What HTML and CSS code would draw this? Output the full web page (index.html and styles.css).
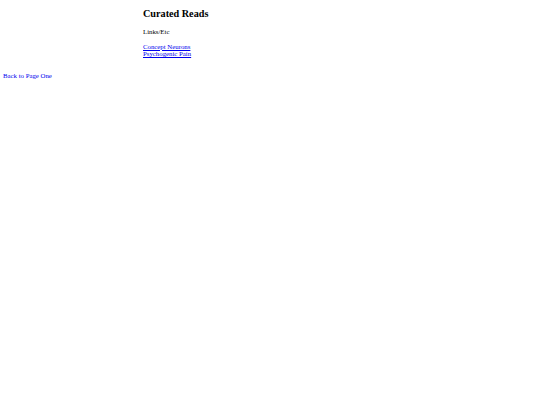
FILE: index.html
```html
<!DOCTYPE html>
<html>
<head>
<meta charset="utf-8">
<link rel="stylesheet" href="styles.css">
</head>
<body>
<div class="main">
<h2 class="title">Curated Reads</h2>
<p class="sub">Links/Etc</p>
<p class="links"><a href="#">Concept Neurons</a><br><a href="#">Psychogenic Pain</a></p>
</div>
<p class="back"><a href="#">Back to Page One</a></p>
</body>
</html>
```
FILE: styles.css
```css
body {
  margin: 3px;
  font-family: "Liberation Serif", "Times New Roman", serif;
  font-size: 6.8px;
  line-height: 7.6px;
  color: #000;
  background: #fff;
}
.main {
  padding-left: 140px;
}
.title {
  font-size: 10.2px;
  line-height: 12px;
  font-weight: bold;
  margin: 0;
  padding-top: 5px;
}
.sub {
  margin: 8px 0 0;
}
.links {
  margin: 7px 0 0;
}
.back {
  margin: 14px 0 0;
}
a {
  color: #00e;
}
```
